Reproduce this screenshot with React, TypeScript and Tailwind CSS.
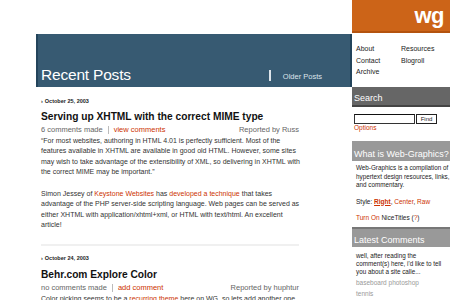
const red = "text-[#cc3300]";

function PostMeta({ comments, link, author }: { comments: string; link: string; author: string }) {
  return (
    <div className="mt-[1px] flex h-[10px] items-center justify-between text-[7.5px] leading-[10px] text-[#666]">
      <div className="flex items-center">
        <span>{comments}</span>
        <span className="mx-[5px] h-[8px] w-px bg-[#bbb]" />
        <span className={red}>{link}</span>
      </div>
      <span>Reported by {author}</span>
    </div>
  );
}

function PostDate({ children }: { children: string }) {
  return (
    <div className="flex h-[8px] items-center text-[5.5px] font-bold leading-[8px] text-[#222]">
      <span className="mr-[2px]">›</span>
      {children}
    </div>
  );
}

function MainColumn() {
  return (
    <div className="w-[316px] shrink-0 pt-[34px]">
      <div className="flex h-[53px] items-end border-l-2 border-r-2 border-l-[#23445b] border-r-[#23445b] bg-[#375a72] pb-[2px] pl-[3px] pr-[28px] text-white">
        <div className="flex-1 text-[15.5px] leading-[20px] tracking-[-0.2px]">Recent Posts</div>
        <span className="mb-[4px] mr-[12px] h-[11px] w-[2px] bg-[#dde4ea]" />
        <span className="mb-[3px] text-[7.5px] leading-[10px] text-[#dde4ea]">Older Posts</span>
      </div>

      <div className="w-[263px] whitespace-nowrap pl-[5px] text-[#333]">
        <div className="mt-[10px]">
          <PostDate>October 25, 2003</PostDate>
        </div>
        <h2 className="mt-[5px] text-[10.2px] font-bold leading-[14px] text-[#111]">
          Serving up XHTML with the correct MIME type
        </h2>
        <PostMeta comments="6 comments made" link="view comments" author="Russ" />
        <p className="mt-[1px] text-[7px] leading-[10.3px]">
          “For most websites, authoring in HTML 4.01 is perfectly sufficient. Most of the
          <br />
          features available in XHTML are available in good old HTML. However, some sites
          <br />
          may wish to take advantage of the extensibility of XML, so delivering in XHTML with
          <br />
          the correct MIME may be important.”
        </p>
        <p className="mt-[12px] text-[7px] leading-[10.3px]">
          Simon Jessey of <span className={red}>Keystone Websites</span> has{" "}
          <span className={red}>developed a technique</span> that takes
          <br />
          advantage of the PHP server-side scripting language. Web pages can be served as
          <br />
          either XHTML with application/xhtml+xml, or HTML with text/html. An excellent
          <br />
          article!
        </p>
        <div className="mt-[14px] h-[2px] bg-[#f0f0f0]" />
        <div className="mt-[8px]">
          <PostDate>October 24, 2003</PostDate>
        </div>
        <h2 className="mt-[6px] text-[10.2px] font-bold leading-[14px] text-[#111]">Behr.com Explore Color</h2>
        <PostMeta comments="no comments made" link="add comment" author="huphtur" />
        <p className="mt-[1px] text-[7px] leading-[10.3px]">
          Color picking seems to be a <span className={red}>recurring theme</span> here on WG, so lets add
          another one.
        </p>
      </div>
    </div>
  );
}

function SideBar({ children, tone }: { children: string; tone: "dark" | "light" | "top" }) {
  const cls =
    tone === "dark"
      ? "bg-[#666] border-b-2 border-b-[#444]"
      : tone === "light"
        ? "bg-[#999]"
        : "bg-[#999] border-t-2 border-t-[#777]";
  return (
    <div
      className={`flex h-[20px] items-end whitespace-nowrap pb-[1px] pl-[2px] text-[9px] leading-[12px] text-white ${cls}`}
    >
      {children}
    </div>
  );
}

function Sidebar() {
  return (
    <div className="w-[98px] shrink-0 whitespace-nowrap text-[6.5px] text-[#222]">
      <div className="flex h-[33px] items-center justify-end border-b-2 border-b-[#b4530e] bg-[#cc6418] pr-[6px]">
        <span className="text-[22px] font-bold leading-none tracking-[-0.5px] text-white">wg</span>
      </div>
      <div className="grid h-[54px] grid-cols-[45px_1fr] content-start pl-[4px] pt-[10px] text-[7px] leading-[11.5px]">
        <span>About</span>
        <span>Resources</span>
        <span>Contact</span>
        <span>Blogroll</span>
        <span>Archive</span>
      </div>
      <SideBar tone="dark">Search</SideBar>
      <div className="mt-[7px] flex pl-[2px]">
        <div className="h-[10px] w-[61px] border border-[#333] border-t-[#111] bg-white" />
        <div className="ml-[1px] flex h-[10px] w-[21px] items-center justify-center border border-[#222] bg-white text-[6px] leading-none">
          Find
        </div>
      </div>
      <div className={`pl-[2px] leading-[8px] ${red}`}>Options</div>
      <div className="mt-[9px]">
        <SideBar tone="light">What is Web-Graphics?</SideBar>
      </div>
      <p className="mt-[3px] pl-[4px] text-[6.3px] leading-[8.5px]">
        Web-Graphics is a compilation of
        <br />
        hypertext design resources, links,
        <br />
        and commentary.
      </p>
      <p className="mt-[8px] pl-[4px] leading-[8px]">
        Style: <span className={`${red} font-bold underline`}>Right</span>,{" "}
        <span className={red}>Center</span>, <span className={red}>Raw</span>
      </p>
      <p className="mt-[8px] pl-[4px] leading-[8px]">
        <span className={red}>Turn On</span> NiceTitles (<span className={red}>?</span>)
      </p>
      <div className="mt-[5px]">
        <SideBar tone="top">Latest Comments</SideBar>
      </div>
      <p className="mt-[5px] pl-[4px] text-[6.3px] leading-[8px]">
        well, after reading the
        <br />
        comment(s) here, i'd like to tell
        <br />
        you about a site calle...
      </p>
      <div className="mt-[2px] pl-[4px] leading-[10px] text-[#999]">baseboard photoshop</div>
      <div className="mt-[1px] pl-[4px] leading-[10px] text-[#999]">tennis</div>
    </div>
  );
}

export default function App() {
  return (
    <div className="flex h-[300px] w-[450px] overflow-hidden bg-white font-['Liberation_Sans',Arial,sans-serif]">
      <div className="w-[36px] shrink-0" />
      <MainColumn />
      <Sidebar />
    </div>
  );
}
